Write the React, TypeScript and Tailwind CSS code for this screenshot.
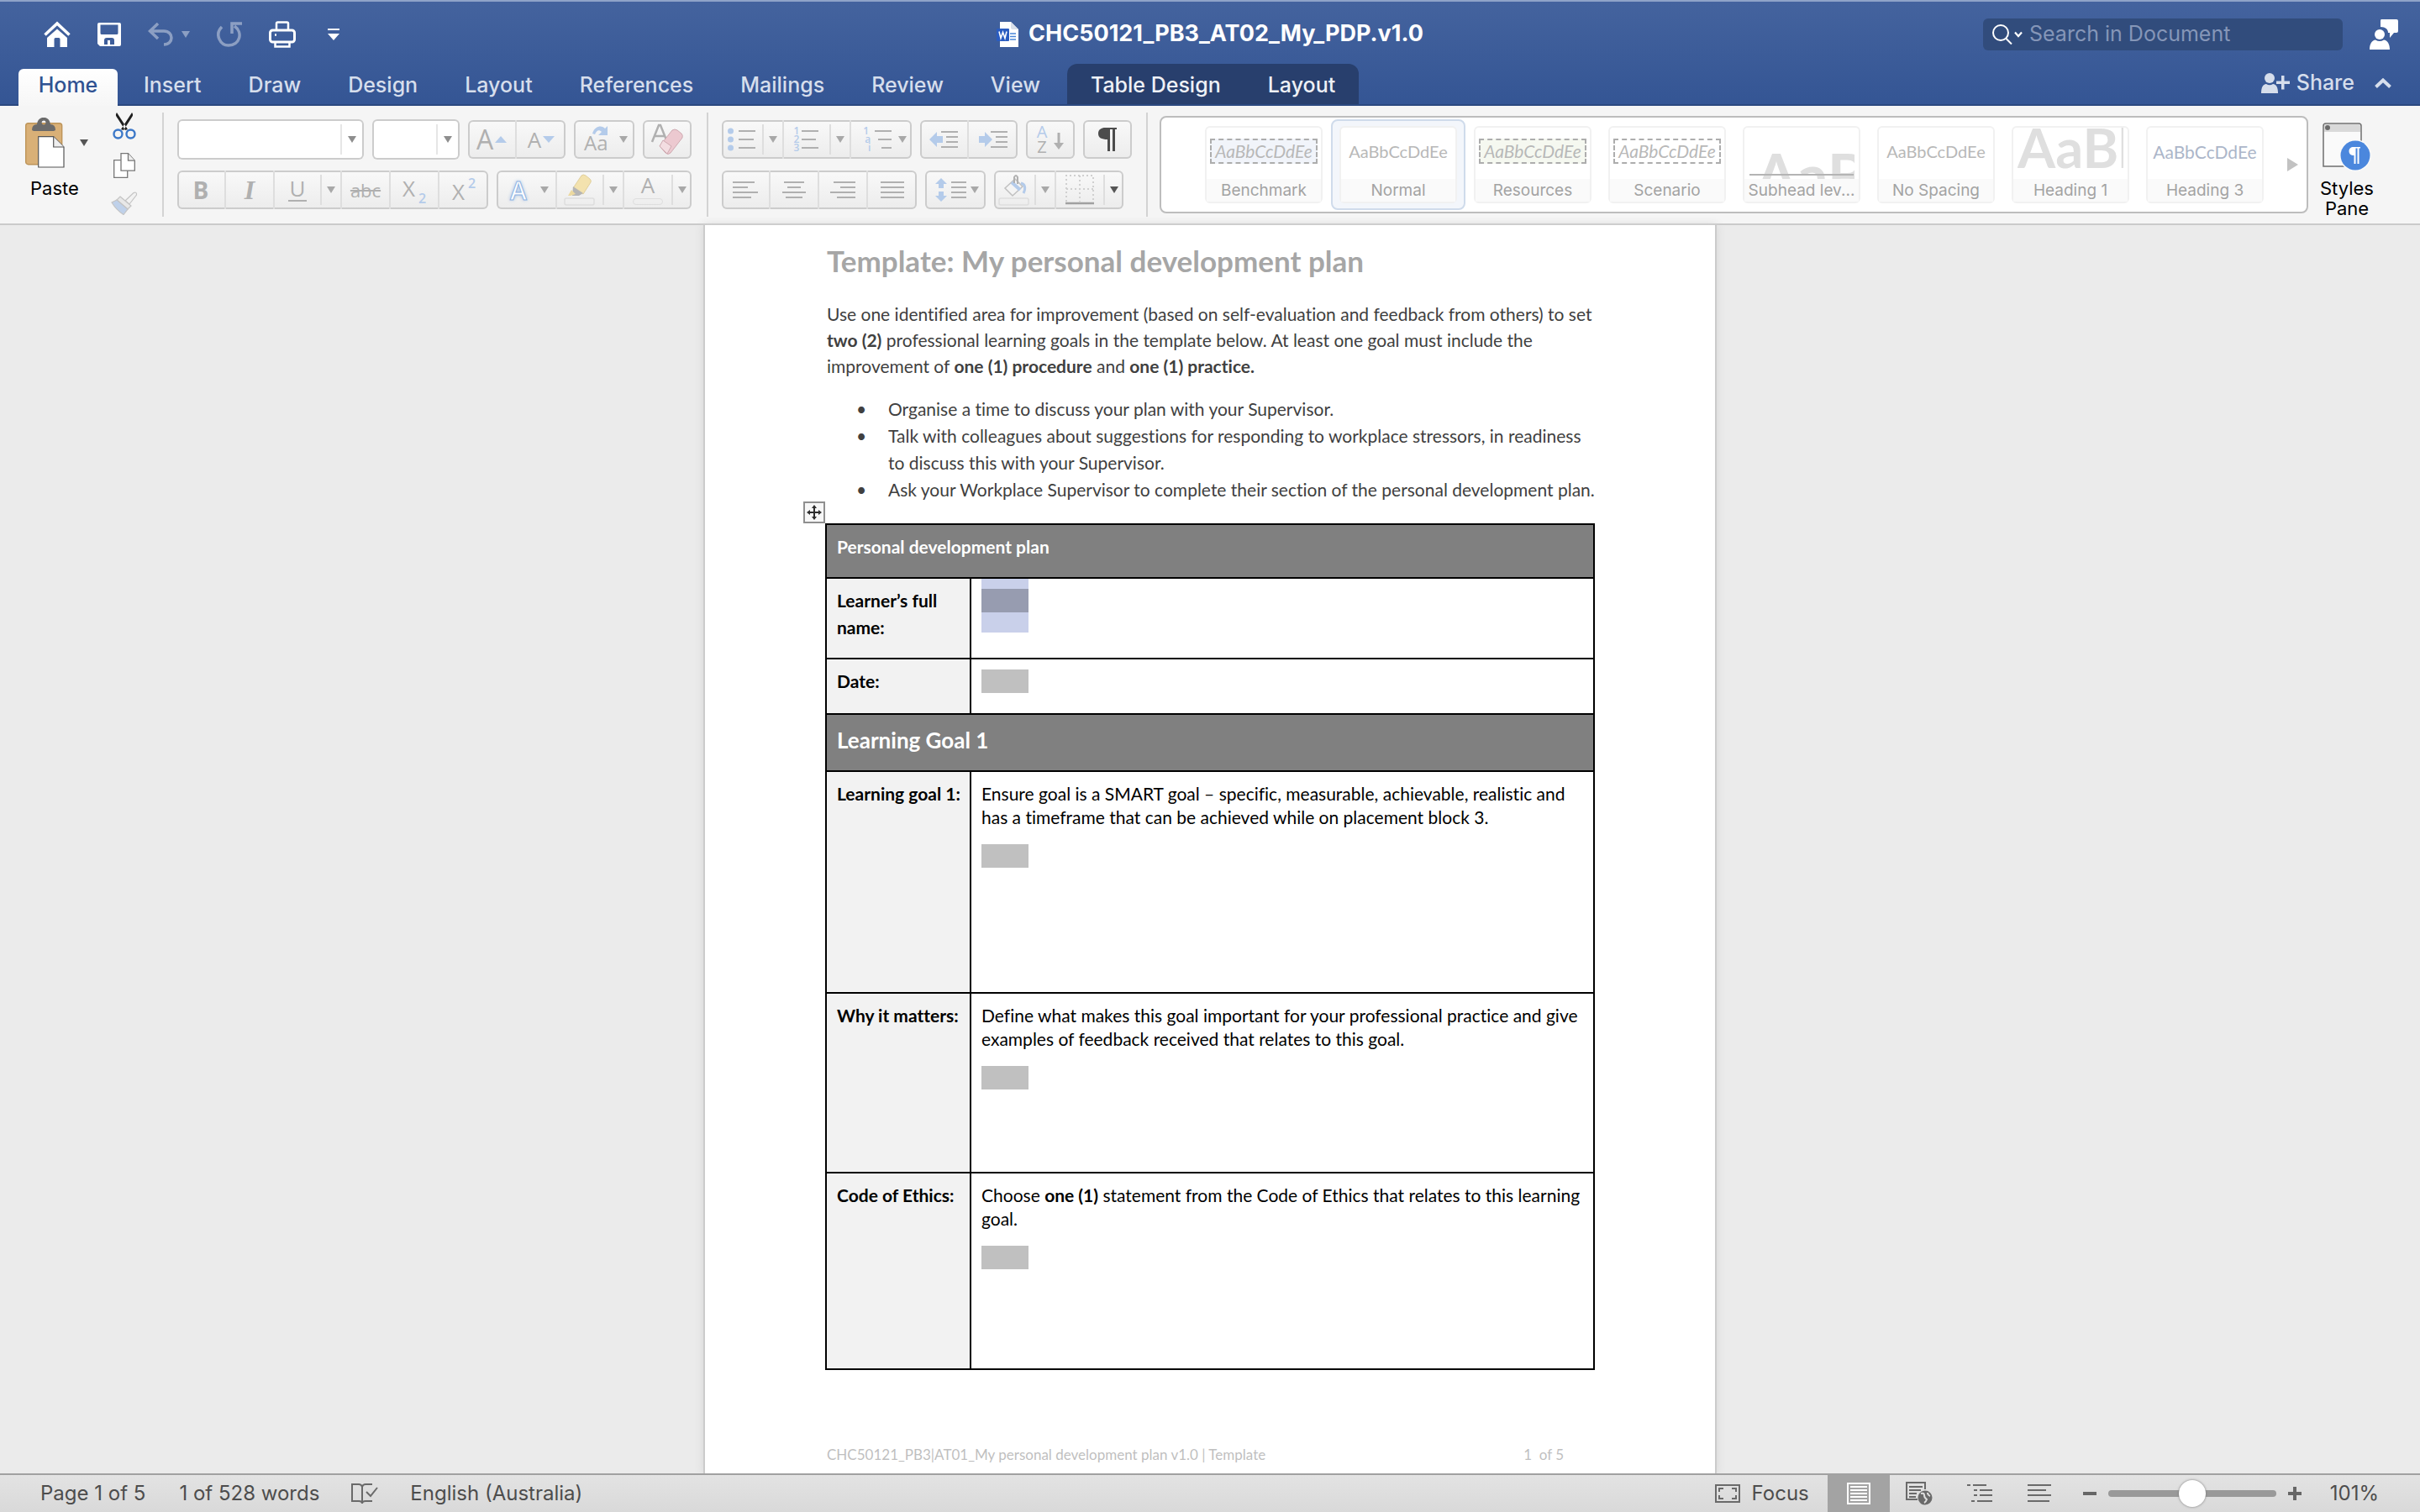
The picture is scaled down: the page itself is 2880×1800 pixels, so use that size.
import type { ReactNode } from 'react'

const BLUE = '#b4cbea'
const GREY = '#b0b0b0'

/* ---------- Small shared pieces ---------- */

const Caret = ({ className = 'text-[#a8a8a8]' }: { className?: string }) => (
	<svg viewBox="0 0 10 8" className={`h-2 w-2.5 shrink-0 ${className}`} aria-hidden="true">
		<path d="M0 0h10L5 8z" fill="currentColor" />
	</svg>
)

const Group = ({ children }: { children: ReactNode }) => (
	<div className="flex h-[46px] shrink-0 divide-x-2 divide-[#dedede] rounded-md bg-linear-to-b from-[#f9f9f9] to-[#ececec] shadow-[inset_0_0_0_2px_#cccccc]">
		{children}
	</div>
)

const Tool = ({ label, children }: { label: string; children: ReactNode }) => (
	<button aria-label={label} className="flex w-[58px] items-center justify-center text-[#b0b0b0]">
		{children}
	</button>
)

const MenuTool = ({ label, children }: { label: string; children: ReactNode }) => (
	<button aria-label={label} className="flex w-[72px] items-center justify-between pr-2 pl-3 text-[#b0b0b0]">
		{children}
		<Caret />
	</button>
)

type SplitToolProps = { label: string; children: ReactNode; dark?: boolean; narrow?: boolean }

const SplitTool = ({ label, children, dark, narrow }: SplitToolProps) => (
	<div className={`flex items-center text-[#b0b0b0] ${narrow ? 'w-[74px]' : 'w-20'}`}>
		<button aria-label={label} className="flex h-full flex-1 items-center justify-center">
			{children}
		</button>
		<button
			aria-label={`${label} options`}
			className="flex h-9 w-6 items-center justify-center border-l-2 border-[#dedede]"
		>
			<Caret className={dark ? 'text-[#555555]' : 'text-[#a8a8a8]'} />
		</button>
	</div>
)

const Separator = () => <div className="mt-2 h-[124px] w-0.5 shrink-0 bg-[#d3d3d3]" />

/* Horizontal rules of different length, used by every list and paragraph icon */
const Lines = ({ rows, color = GREY }: { rows: number[][]; color?: string }) => (
	<g stroke={color} strokeWidth="2">
		{rows.map(([x1, x2, y]) => (
			<path key={y} d={`M${x1} ${y}H${x2}`} />
		))}
	</g>
)

/* ---------- Title bar ---------- */

const QuickAccess = () => (
	<div className="flex items-center gap-8 pl-[52px] text-white">
		<button aria-label="Home">
			<svg viewBox="0 0 32 32" className="size-8" fill="none">
				<path d="M1.500 16.500 16 3l14.500 13.500" stroke="currentColor" strokeWidth="3.500" />
				<path d="M16 9.500 28 20v11h-8.500v-9.500q0-1.500-1.500-1.500h-4q-1.500 0-1.500 1.500V31H4V20z" fill="currentColor" />
			</svg>
		</button>
		<button aria-label="Save">
			<svg viewBox="0 0 28 28" className="size-7">
				<path
					fillRule="evenodd"
					fill="currentColor"
					d="M2 0h24q2 0 2 2v24q0 2-2 2H3l-3-3V2q0-2 2-2zm1.500 2.500v10q0 1.500 1.500 1.500h18q1.500 0 1.500-1.500v-10zM8 26h4v-5h3v5h5v-5q0-3-3-3h-6q-3 0-3 3z"
				/>
			</svg>
		</button>
		<div className="flex items-center gap-2.5 opacity-40">
			<button aria-label="Undo">
				<svg viewBox="0 0 30 28" className="h-7 w-[30px]" fill="none" stroke="currentColor" strokeWidth="3.500">
					<path d="M12 1 2.500 10 12 19M3 10h16c12 0 12 16 0 16" />
				</svg>
			</button>
			<Caret className="text-white" />
		</div>
		<button aria-label="Repeat" className="opacity-40">
			<svg viewBox="0 0 30 30" className="h-[30px] w-[30px]" fill="none" stroke="currentColor" strokeWidth="3.500">
				<path d="M6 6C-3 15 4 28 14 28c13 0 18-15 7-23M30 2H18v12" />
			</svg>
		</button>
		<button aria-label="Print">
			<svg viewBox="0 0 32 32" className="size-8" fill="none" stroke="currentColor" strokeWidth="2.500">
				<path d="M9 11V3q0-1.500 1.500-1.500h11Q23 1.500 23 3v8" />
				<rect x="1.500" y="11" width="29" height="14" rx="3" strokeWidth="3" />
				<path d="M7 16.500h2" />
				<path d="M7.500 24v6.500h17V24" />
			</svg>
		</button>
		<button aria-label="Customise toolbar" className="ml-1.5">
			<svg viewBox="0 0 14 14" className="size-3.5" fill="currentColor">
				<path d="M0 0h14v2H0zM0 6h14l-7 8z" />
			</svg>
		</button>
	</div>
)

const WordFile = () => (
	<svg viewBox="0 0 26 30" className="h-[30px] w-[26px]" aria-hidden="true">
		<path d="M4 0h13l9 9v21H4z" fill="#ffffff" />
		<path d="M17 0l9 9h-7q-2 0-2-2z" fill="#d9dfe9" />
		<path d="M16 14h7M16 17.500h7M16 21h7" stroke="#4a86d8" strokeWidth="1.500" />
		<rect y="8" width="15" height="15" rx="1" fill="#2a5cc0" />
		<path d="m3 11.500 2 8 2.500-7 2.500 7 2-8" fill="none" stroke="#ffffff" strokeWidth="1.600" />
	</svg>
)

const TitleBar = () => (
	<div className="grid h-[74px] grid-cols-[1fr_auto_1fr] items-center pt-[3px]">
		<QuickAccess />
		<h1 className="flex items-center gap-3 text-[27px] font-bold text-white">
			<WordFile />
			CHC50121_PB3_AT02_My_PDP.v1.0
		</h1>
		<div className="flex items-center justify-end gap-8 pr-[26px]">
			<label className="flex h-[38px] w-[428px] items-center rounded-md bg-[#314c7c] pl-[11px]">
				<svg viewBox="0 0 36 24" className="h-6 w-9 shrink-0" fill="none" stroke="#ffffff" strokeWidth="2">
					<circle cx="10" cy="10" r="9" />
					<path d="m16.500 17 6.500 6.500" />
					<path d="m27 9.500 4 4.500 4-4.500" strokeWidth="2.200" />
				</svg>
				<input
					type="search"
					aria-label="Search in Document"
					placeholder="Search in Document"
					className="ml-2 min-w-0 flex-1 bg-transparent text-[25px] text-white outline-none placeholder:text-[#8596b8]"
				/>
			</label>
			<button aria-label="Feedback">
				<svg viewBox="0 0 34 36" className="h-9 w-[34px]" fill="#ffffff">
					<path d="M14 0h18q2 0 2 2v12q0 2-2 2h-3l-5 6v-6h-2c0-4-3-7-9-7V2q0-2 1-2z" />
					<circle cx="12" cy="18" r="6" />
					<path d="M0 36c0-7 3-11 7-11.500q5 3 10 0c4 .500 7 4.500 7 11.500z" />
				</svg>
			</button>
		</div>
	</div>
)

const tabs = ['Insert', 'Draw', 'Design', 'Layout', 'References', 'Mailings', 'Review', 'View']

const TabBar = () => (
	<div className="flex h-[50px] items-end justify-between text-[25px] font-medium text-[#d6deec]">
		<nav className="flex items-end pl-[22px]">
			<button className="mr-[3px] h-11 w-[118px] rounded-t-md bg-linear-to-b from-white to-[#f6f6f6] pb-1 text-[#2f5292]">
				Home
			</button>
			{tabs.map((tab) => (
				<button key={tab} className="mb-0.5 h-12 px-7 pt-1">
					{tab}
				</button>
			))}
			<div className="mb-0.5 ml-1 flex h-12 rounded-t-xl bg-[#283f6d] pt-1 text-[#eef1f6]">
				<button className="px-7">Table Design</button>
				<button className="px-7">Layout</button>
			</div>
		</nav>
		<div className="flex h-full items-center gap-6 pr-[34px] pb-1">
			<button className="flex items-center gap-2">
				<svg viewBox="0 0 34 24" className="h-6 w-[34px]" fill="currentColor">
					<circle cx="10" cy="6" r="6" />
					<path d="M0 24c0-7 2-10.500 6-11q4 2.500 8 0c4 .500 6 4 6 11zM24 3h3.500v6.500H34V13h-6.500v6.500H24V13h-6V9.500h6z" />
				</svg>
				Share
			</button>
			<button aria-label="Collapse ribbon">
				<svg viewBox="0 0 20 12" className="h-3 w-5" fill="none" stroke="currentColor" strokeWidth="4">
					<path d="m1.500 10.500 8.500-8 8.500 8" />
				</svg>
			</button>
		</div>
	</div>
)

/* ---------- Ribbon ---------- */

const Clipboard = () => (
	<div className="flex w-[193px] shrink-0 gap-[26px] pt-2">
		<div className="w-[106px] pt-1.5 pl-[30px]">
			<button className="flex flex-col items-start text-[22px] leading-7 text-black">
				<span className="flex items-center gap-[18px]">
					<svg viewBox="0 0 47 60" className="h-[60px] w-[47px]">
						<rect x=".7" y="6.700" width="43" height="49" rx="3" fill="#d9b077" stroke="#bd9459" strokeWidth="1.400" />
						<path
							fillRule="evenodd"
							fill="#6b6b6b"
							d="M8 15q0-7 6-7c1-11 15-11 16 0q6 0 6 7l-2 1H10zM22 3.500a2.500 2.500 0 1 0 .1 5 2.500 2.500 0 0 0-.1-5z"
						/>
						<path d="M15.700 22.700h18L46 35v24H15.700z" fill="#ffffff" stroke="#555555" strokeWidth="1.200" />
						<path d="M33.700 22.700V35H46" fill="#eeeeee" stroke="#555555" strokeWidth="1.200" />
					</svg>
					<Caret className="text-[#555555]" />
				</span>
				<span className="mt-2.5 pl-1.5">Paste</span>
			</button>
		</div>
		<div className="flex flex-col items-center gap-4">
			<button aria-label="Cut">
				<svg viewBox="0 0 30 32" className="h-8 w-[30px]" fill="none">
					<path d="M6 0c-2 3-1 4 1 7l9 14 3-1zM24 0c2 3 1 4-1 7l-9 14-3-1z" fill="#1f1f1f" />
					<circle cx="7.500" cy="25.500" r="5" stroke="#3c78c8" strokeWidth="2.400" />
					<circle cx="22.500" cy="25.500" r="5" stroke="#3c78c8" strokeWidth="2.400" />
				</svg>
			</button>
			<button aria-label="Copy">
				<svg viewBox="0 0 26 30" className="h-[30px] w-[26px]" fill="#ffffff" stroke="#777777" strokeWidth="1.300">
					<path d="M.7 8.700h16v20.600H.7z" />
					<path d="M9 .7h8.500l7.800 8.500v12H9z" />
					<path d="M17.500.7v8.500h7.800" fill="#eeeeee" />
				</svg>
			</button>
			<button aria-label="Format painter">
				<svg viewBox="0 0 32 28" className="h-7 w-8" strokeWidth="1.200" stroke="#c4c4c4">
					<path d="M17 11 27 1.500q4-1.500 3.500 2.500L22 15z" fill="#f2f2f2" />
					<path d="m11 6 13 11-4 4L7 10z" fill="#e8e8e8" />
					<path d="M7 10 1 13c3 5 7 10 14 14.500L20 21z" fill="#bfd1ea" />
				</svg>
			</button>
		</div>
	</div>
)

const Combo = ({ label, size }: { label: string; size: string }) => (
	<div className={`relative h-12 ${size}`}>
		<select
			aria-label={label}
			className="h-full w-full appearance-none rounded-md bg-white shadow-[inset_0_0_0_2px_#cccccc]"
		>
			<option value=""></option>
		</select>
		<span className="pointer-events-none absolute top-1.5 right-0.5 flex h-9 w-[26px] items-center justify-center border-l-2 border-[#e6e6e6]">
			<Caret className="text-[#8e8e8e]" />
		</span>
	</div>
)

const FontGroup = () => (
	<div className="flex shrink-0 flex-col gap-[13px] pt-4 pr-[18px] pl-4 font-['Open_Sans',sans-serif]">
		<div className="flex h-12 items-center gap-2.5">
			<Combo label="Font" size="w-[222px]" />
			<Combo label="Font size" size="w-[104px]" />
			<Group>
				<Tool label="Increase font size">
					<span className="text-[32px]">A</span>
					<svg viewBox="0 0 14 8" className="ml-0.5 h-2 w-3.5">
						<path d="M0 8h14L7 0z" fill={BLUE} />
					</svg>
				</Tool>
				<Tool label="Decrease font size">
					<span className="text-[26px]">A</span>
					<svg viewBox="0 0 14 8" className="ml-0.5 h-2 w-3.5">
						<path d="M0 0h14L7 8z" fill={BLUE} />
					</svg>
				</Tool>
			</Group>
			<Group>
				<MenuTool label="Change case">
					<span className="relative pt-2 text-2xl">
						Aa
						<svg viewBox="0 0 20 12" className="absolute top-1 left-2.5 h-3 w-5">
							<path d="M0 9C3-1 12-1 15 3l3-3v11H7l4-4C8 4 5 5 3 10z" fill={BLUE} />
						</svg>
					</span>
				</MenuTool>
			</Group>
			<Group>
				<Tool label="Clear formatting">
					<svg viewBox="0 0 40 38" className="h-[38px] w-10">
						<path d="M2 22 10 2h2l8 20M5 15h12" fill="none" stroke={GREY} strokeWidth="2.500" />
						<path d="M26 8q3-2 6 0l5 4q2 2 1 5L24 35q-3 3-6 0l-7-8z" fill="#ecc9d0" stroke="#cfaab1" />
						<path d="m11 27 4-7 10 7-5 9z" fill="#f3dde1" stroke="#cfaab1" />
					</svg>
				</Tool>
			</Group>
		</div>
		<div className="flex gap-2.5">
			<Group>
				<Tool label="Bold">
					<span className="text-[28px] font-bold">B</span>
				</Tool>
				<Tool label="Italic">
					<span className="font-['Liberation_Serif',serif] text-[32px] font-bold italic">I</span>
				</Tool>
				<SplitTool label="Underline">
					<span className="h-7 border-b-2 border-[#b0b0b0] px-0.5 text-[26px] leading-6">U</span>
				</SplitTool>
				<Tool label="Strikethrough">
					<span className="text-[22px] line-through">abc</span>
				</Tool>
				<Tool label="Subscript">
					<span className="-mt-1 text-[26px]">X</span>
					<span className="mt-5 ml-1 text-base font-semibold text-[#b4cbea]">2</span>
				</Tool>
				<Tool label="Superscript">
					<span className="mt-1 text-[26px]">X</span>
					<span className="mb-4 ml-1 text-base font-semibold text-[#b4cbea]">2</span>
				</Tool>
			</Group>
			<Group>
				<MenuTool label="Text effects">
					<span className="pl-1 text-[30px] font-semibold text-white [-webkit-text-stroke:1px_#8fb4e3] [text-shadow:0_0_4px_#8fb4e3]">
						A
					</span>
				</MenuTool>
				<SplitTool label="Highlight colour">
					<svg viewBox="0 0 38 38" className="h-[38px] w-[38px]">
						<path d="M21 2q2-2 5 0l5 4q2 2 1 4l-9 14-12-7z" fill="#f3e2ae" stroke="#e0cf9c" />
						<path d="m11 15 12 8-5 3-8 0z" fill="#b5b5b5" />
						<path d="m9 19 5 5-6 2H5z" fill="#ecd9a0" />
						<rect x="1" y="29" width="35" height="8" rx="2" fill="none" stroke="#dedede" strokeWidth="1.500" />
					</svg>
				</SplitTool>
				<SplitTool label="Font colour">
					<span className="flex flex-col items-center gap-1">
						<span className="text-[26px] leading-6">A</span>
						<span className="h-2 w-9 rounded-sm border border-[#dedede]" />
					</span>
				</SplitTool>
			</Group>
		</div>
	</div>
)

const alignments = [
	{ label: 'Align left', rows: [[0, 26, 2], [0, 18, 8], [0, 30, 14], [0, 22, 20]] },
	{ label: 'Centre', rows: [[3, 27, 2], [7, 23, 8], [1, 29, 14], [5, 25, 20]] },
	{ label: 'Align right', rows: [[4, 30, 2], [12, 30, 8], [0, 30, 14], [8, 30, 20]] },
	{ label: 'Justify', rows: [[1, 29, 2], [1, 29, 8], [1, 29, 14], [1, 29, 20]] },
]

const ParagraphGroup = () => (
	<div className="flex shrink-0 flex-col gap-[13px] pt-4 pr-[17px] pl-4 font-['Open_Sans',sans-serif]">
		<div className="flex h-12 items-center gap-2.5">
			<Group>
				<SplitTool label="Bullets" narrow>
					<svg viewBox="0 0 34 30" className="h-[30px] w-[34px]">
						<g fill={BLUE}>
							<circle cx="3.500" cy="5" r="3.500" />
							<circle cx="3.500" cy="15" r="3.500" />
							<circle cx="3.500" cy="25" r="3.500" />
						</g>
						<Lines rows={[[13, 33, 5], [13, 31, 15], [13, 33, 25]]} />
					</svg>
				</SplitTool>
				<SplitTool label="Numbering">
					<span className="flex flex-col text-xs leading-[10px] font-semibold text-[#b4cbea]">
						<span>1</span>
						<span>2</span>
						<span>3</span>
					</span>
					<svg viewBox="0 0 24 30" className="h-[30px] w-6">
						<Lines rows={[[3, 23, 5], [3, 20, 15], [3, 23, 25]]} />
					</svg>
				</SplitTool>
				<button aria-label="Multilevel list" className="flex w-[72px] items-center justify-between pr-1.5 pl-3">
					<span className="flex flex-col text-xs leading-[10px] font-semibold text-[#b4cbea]">
						<span>1</span>
						<span className="pl-1">a</span>
						<span className="pl-2">i</span>
					</span>
					<svg viewBox="0 0 24 30" className="h-[30px] w-6">
						<Lines rows={[[0, 20, 5], [4, 20, 15], [8, 20, 25]]} />
					</svg>
					<Caret />
				</button>
			</Group>
			<Group>
				<Tool label="Decrease indent">
					<svg viewBox="0 0 34 24" className="h-6 w-[34px]">
						<path d="M0 12 9 3v5h7v8H9v5z" fill={BLUE} />
						<Lines rows={[[14, 34, 3], [20, 34, 9], [20, 34, 15], [14, 34, 21]]} />
					</svg>
				</Tool>
				<Tool label="Increase indent">
					<svg viewBox="0 0 34 24" className="h-6 w-[34px]">
						<path d="M16 12 7 3v5H0v8h7v5z" fill={BLUE} />
						<Lines rows={[[14, 34, 3], [20, 34, 9], [20, 34, 15], [14, 34, 21]]} />
					</svg>
				</Tool>
			</Group>
			<Group>
				<Tool label="Sort">
					<span className="flex flex-col text-xl leading-[18px]">
						<span className="text-[#b4cbea]">A</span>
						<span>Z</span>
					</span>
					<svg viewBox="0 0 12 20" className="mt-1 ml-2 h-5 w-3">
						<path d="M4.500 0h3v12H12l-6 8-6-8h4.500z" fill={GREY} />
					</svg>
				</Tool>
			</Group>
			<Group>
				<Tool label="Show formatting marks">
					<svg viewBox="0 0 22 28" className="h-7 w-[22px]" fill="#4c4c4c">
						<path d="M8 0h14v2h-2v26h-3V2h-3v26h-3V14C4 14 0 12 0 7s4-7 8-7z" />
					</svg>
				</Tool>
			</Group>
		</div>
		<div className="flex gap-2.5">
			<Group>
				{alignments.map(({ label, rows }) => (
					<Tool key={label} label={label}>
						<svg viewBox="0 0 30 22" className="h-[22px] w-[30px]">
							<Lines rows={rows} />
						</svg>
					</Tool>
				))}
			</Group>
			<Group>
				<MenuTool label="Line spacing">
					<svg viewBox="0 0 38 28" className="h-7 w-[38px]">
						<path d="m7 0 7 7h-4v5H4V7H0zM7 28l7-7h-4v-5H4v5H0z" fill={BLUE} />
						<Lines rows={[[19, 37, 5], [19, 37, 11], [19, 37, 17], [19, 37, 23]]} />
					</svg>
				</MenuTool>
			</Group>
			<Group>
				<SplitTool label="Shading" narrow>
					<svg viewBox="0 0 38 38" className="h-[38px] w-[38px]">
						<path d="M20 6 8 17l9 9 12-11z" fill="#f4f4f4" stroke="#c0c0c0" strokeWidth="1.500" />
						<path d="m16 10 10 9" stroke={BLUE} strokeWidth="4" />
						<path d="M27 11c5 1 6 6 3 12" fill="none" stroke={BLUE} strokeWidth="3" />
						<path d="M19 11V4q2-4 4 0v8" fill="none" stroke={GREY} strokeWidth="2" />
						<rect x="1" y="29" width="35" height="8" rx="2" fill="none" stroke="#dedede" strokeWidth="1.500" />
					</svg>
				</SplitTool>
				<SplitTool label="Borders" dark>
					<svg viewBox="0 0 34 36" className="h-9 w-[34px]" fill="none" stroke="#d0d0d0" strokeWidth="2">
						<path d="M1 32V1h32v31M1 17h32M17 1v31" strokeDasharray="2 3" />
						<path d="M0 34h34" stroke="#a0a0a0" strokeWidth="2.500" />
					</svg>
				</SplitTool>
			</Group>
		</div>
	</div>
)

const boxedPreview = 'mb-1.5 w-32 border-2 border-dashed border-[#adadad] text-[21px] leading-[26px] italic'
const plainPreview = 'mb-1.5 text-xl'

const styleCards = [
	{ name: 'Benchmark', sample: 'AaBbCcDdEe', preview: `${boxedPreview} bg-[#f1f4fa]` },
	{ name: 'Normal', sample: 'AaBbCcDdEe', preview: plainPreview, selected: true },
	{ name: 'Resources', sample: 'AaBbCcDdEe', preview: `${boxedPreview} bg-[#f5f8f0]` },
	{ name: 'Scenario', sample: 'AaBbCcDdEe', preview: boxedPreview },
	{
		name: 'Subhead lev...',
		sample: 'AaB',
		preview: 'mt-5 w-[126px] self-start pl-2 text-left text-[72px] leading-[72px] font-bold text-[#dfdfdf]',
		ruled: true,
	},
	{ name: 'No Spacing', sample: 'AaBbCcDdEe', preview: plainPreview },
	{
		name: 'Heading 1',
		sample: 'AaBb',
		preview: '-mt-2.5 w-[126px] self-start text-left text-[65px] leading-[66px] font-bold text-[#dfdfdf]',
	},
	{ name: 'Heading 3', sample: 'AaBbCcDdEe', preview: 'mb-1 text-[21px] text-[#acb6c9]' },
]

const StylesGallery = () => (
	<div className="mt-3 ml-3.5 flex h-[116px] min-w-0 flex-1 items-start justify-between overflow-hidden rounded-lg border-2 border-[#bdbdbd] bg-white pr-2.5 pl-[42px]">
		<div className="flex pt-0.5">
			{styleCards.map(({ name, sample, preview, selected, ruled }) => (
				<button
					key={name}
					className={`h-[108px] w-40 shrink-0 rounded-lg border-2 px-2 py-1.5 ${
						selected ? 'border-[#cfdbeb] bg-[#f3f6fb]' : 'border-transparent'
					}`}
				>
					<span className="flex h-full flex-col rounded-md border-2 border-[#f1f1f1] bg-white">
						<span className="relative flex h-[61px] items-center justify-center overflow-hidden font-['Lato',sans-serif] whitespace-nowrap text-[#b8b8b8]">
							<span className={`shrink-0 overflow-hidden ${preview}`}>{sample}</span>
							{ruled && <span className="absolute right-1.5 bottom-1 left-1.5 h-0.5 bg-[#b4b4b4]" />}
						</span>
						<span className="flex flex-1 items-center justify-center bg-[#fafafa] text-[19px] leading-6 text-[#a3a3a3]">
							{name}
						</span>
					</span>
				</button>
			))}
		</div>
		<button aria-label="More styles" className="h-full">
			<svg viewBox="0 0 13 16" className="h-4 w-[13px]">
				<path d="M0 0v16l13-8z" fill="#c2c2c2" />
			</svg>
		</button>
	</div>
)

const StylesPane = () => (
	<button className="mr-[43px] flex w-[90px] shrink-0 flex-col items-center pt-5 pl-0.5 text-[22px] leading-6 text-black">
		<svg viewBox="0 0 58 58" className="mb-2 h-[58px] w-[58px]">
			<path d="M1 52V4q0-3 3-3h39q3 0 3 3v48z" fill="#fafafa" stroke="#6f6f6f" strokeWidth="1.500" />
			<path d="M2 11V4q0-2 2-2h39q2 0 2 2v7z" fill="#d9d9d9" />
			<circle cx="6" cy="6" r="3" fill="#6a6a6a" />
			<circle cx="39" cy="39" r="19" fill="#fafafa" />
			<circle cx="39" cy="39" r="17.500" fill="#4b87dd" />
			<path d="M37 29h8v1.500h-1.500V49h-2V30.500h-2V49h-2V39c-4 0-6-2-6-5s2-5 5.500-5z" fill="#ffffff" />
		</svg>
		Styles Pane
	</button>
)

const Ribbon = () => (
	<div className="flex h-[142px] border-b-2 border-[#cacaca] bg-[#f5f5f5]">
		<Clipboard />
		<Separator />
		<FontGroup />
		<Separator />
		<ParagraphGroup />
		<Separator />
		<StylesGallery />
		<StylesPane />
	</div>
)

/* ---------- Document ---------- */

const Field = ({ label }: { label: string }) => (
	<input aria-label={label} className="block h-7 w-14 bg-[#c0c0c0] outline-none" />
)

const labelCell = 'border-2 border-black bg-[#f2f2f2] px-3 pt-2.5 text-left align-top leading-8 font-bold whitespace-nowrap'
const bodyCell = 'border-2 border-black px-3 pt-3 align-top leading-7 whitespace-nowrap'
const headCell = 'border-2 border-black bg-[#808080] px-3 pt-2.5 text-left align-top font-bold text-white'

const PlanTable = () => (
	<div className="relative mt-6">
		<button
			aria-label="Move table"
			className="absolute -top-[26px] -left-[26px] flex size-[26px] items-center justify-center border-2 border-[#8f8f8f] bg-[#f7f7f7]"
		>
			<svg viewBox="0 0 18 18" className="size-[18px]" fill="#2e2e2e">
				<path d="M8 4H6l3-4 3 4h-2v4h4V6l4 3-4 3v-2h-4v4h2l-3 4-3-4h2v-4H4v2L0 9l4-3v2h4z" />
			</svg>
		</button>
		<table className="w-full table-fixed border-collapse text-black">
			<colgroup>
				<col className="w-[172px]" />
				<col />
			</colgroup>
			<thead>
				<tr className="h-16">
					<th colSpan={2} className={`${headCell} leading-8`}>
						Personal development plan
					</th>
				</tr>
			</thead>
			<tbody>
				<tr className="h-24">
					<th className={labelCell}>
						Learner’s full
						<br />
						name:
					</th>
					<td className="border-2 border-black px-3 align-top">
						<div className="w-14 bg-[#c9d0ea] pt-3 pb-6">
							<input aria-label="Learner’s full name" className="block h-7 w-14 bg-[#979cb0] outline-none" />
						</div>
					</td>
				</tr>
				<tr className="h-[66px]">
					<th className={labelCell}>Date:</th>
					<td className={bodyCell}>
						<Field label="Date" />
					</td>
				</tr>
				<tr className="h-[68px]">
					<th colSpan={2} className={`${headCell} text-[26px] leading-10`}>
						Learning Goal 1
					</th>
				</tr>
				<tr className="h-[264px]">
					<th className={labelCell}>Learning goal 1:</th>
					<td className={bodyCell}>
						<p className="mb-[18px]">
							Ensure goal is a SMART goal – specific, measurable, achievable, realistic and
							<br />
							has a timeframe that can be achieved while on placement block 3.
						</p>
						<Field label="Learning goal 1" />
					</td>
				</tr>
				<tr className="h-[214px]">
					<th className={labelCell}>Why it matters:</th>
					<td className={bodyCell}>
						<p className="mb-[18px]">
							Define what makes this goal important for your professional practice and give
							<br />
							examples of feedback received that relates to this goal.
						</p>
						<Field label="Why it matters" />
					</td>
				</tr>
				<tr className="h-[234px]">
					<th className={labelCell}>Code of Ethics:</th>
					<td className={bodyCell}>
						<p className="mb-[18px]">
							Choose <b>one (1)</b> statement from the Code of Ethics that relates to this learning
							<br />
							goal.
						</p>
						<Field label="Code of Ethics" />
					</td>
				</tr>
			</tbody>
		</table>
	</div>
)

const Bullet = ({ children }: { children: ReactNode }) => (
	<li className="flex">
		<span className="w-[38px] shrink-0" aria-hidden="true">
			•
		</span>
		<span>{children}</span>
	</li>
)

const Document = () => (
	<main className="flex flex-1 justify-center bg-[#ebebeb]">
		<article className="flex w-[1206px] flex-col border-x-2 border-[#cbcbcb] bg-white px-[143px] pt-[22px] pb-2.5 font-['Lato',sans-serif] text-[21px] text-[#404040] shadow-[0_0_10px_#d4d4d4] [font-variant-ligatures:none]">
			<h2 className="pl-0.5 text-[35px] leading-10 font-bold text-[#a6a6a6]">Template: My personal development plan</h2>
			<p className="mt-7 pl-0.5 leading-[31px] whitespace-nowrap">
				Use one identified area for improvement (based on self-evaluation and feedback from others) to set
				<br />
				<b>two (2)</b> professional learning goals in the template below. At least one goal must include the
				<br />
				improvement of <b>one (1) procedure</b> and <b>one (1) practice.</b>
			</p>
			<ul className="mt-5 pl-[37px] leading-8 whitespace-nowrap">
				<Bullet>Organise a time to discuss your plan with your Supervisor.</Bullet>
				<Bullet>
					Talk with colleagues about suggestions for responding to workplace stressors, in readiness
					<br />
					to discuss this with your Supervisor.
				</Bullet>
				<Bullet>Ask your Workplace Supervisor to complete their section of the personal development plan.</Bullet>
			</ul>
			<PlanTable />
			<footer className="mt-auto flex justify-between pr-[37px] pl-0.5 text-[17px] leading-6 text-[#bfbfbf]">
				<span>CHC50121_PB3|AT01_My personal development plan v1.0 | Template</span>
				<span>1&nbsp; of 5</span>
			</footer>
		</article>
	</main>
)

/* ---------- Status bar ---------- */

const StatusBar = () => (
	<div className="flex h-[46px] items-center justify-between border-t-2 border-[#a1a1a1] bg-linear-to-b from-[#e3e3e3] to-[#d9d9d9] pr-[49px] pl-12 text-2xl text-[#4d4d4d]">
		<div className="flex items-center">
			<button className="mr-10">Page 1 of 5</button>
			<button className="mr-[38px]">1 of 528 words</button>
			<button aria-label="Proofing" className="mr-[38px]">
				<svg viewBox="0 0 32 26" className="h-[26px] w-8" fill="none" stroke="#6a6a6a" strokeWidth="2">
					<path d="M13 23V5q-1-3-4-3H1v20h8q4 0 4 3 0-3 4-3h8M13 5q1-3 4-3h8" />
					<path d="m18 11 5 5 8-10" />
				</svg>
			</button>
			<button>English (Australia)</button>
		</div>
		<div className="flex h-full items-center">
			<button className="mr-[22px] flex items-center gap-3.5">
				<svg viewBox="0 0 30 22" className="h-[22px] w-[30px]" fill="none" stroke="#6a6a6a" strokeWidth="2">
					<path d="M1 1h28v20H1z" />
					<path d="M5 9V5h5M20 5h5v4M25 13v4h-5M10 17H5v-4" />
				</svg>
				Focus
			</button>
			<button aria-label="Print layout" className="flex h-full w-[74px] items-center justify-center bg-[#a3a3a3]">
				<svg viewBox="0 0 28 26" className="h-[26px] w-7" fill="none" stroke="#ffffff" strokeWidth="2">
					<path d="M1 1h26v24H1zM4 5h20M4 9h20M4 13h20M4 17h20M4 21h20" />
				</svg>
			</button>
			<button aria-label="Web layout" className="ml-[19px]">
				<svg viewBox="0 0 32 28" className="h-7 w-8" fill="none" stroke="#6a6a6a" strokeWidth="2">
					<path d="M14 21H1V1h22v8M4 6h16M4 10h14M4 14h9M4 18h8" />
					<circle cx="23" cy="19" r="8.500" fill="#6a6a6a" stroke="none" />
					<path d="M18 14q4-1 4 2t3 5q-1 3-3 4M26 13q0 3 3 4" stroke="#dedede" />
				</svg>
			</button>
			<button aria-label="Outline" className="ml-[41px]">
				<svg viewBox="0 0 30 22" className="h-[22px] w-[30px]" fill="none" stroke="#6a6a6a" strokeWidth="2">
					<path d="M0 1h4M7 1h16M8 7h4M15 7h15M8 13h4M15 13h15M5 20h4M12 20h18" />
				</svg>
			</button>
			<button aria-label="Draft" className="ml-[42px]">
				<svg viewBox="0 0 28 22" className="h-[22px] w-7" fill="none" stroke="#6a6a6a" strokeWidth="2">
					<path d="M0 1h28M0 7h22M0 13h28M0 20h26" />
				</svg>
			</button>
			<button aria-label="Zoom out" className="ml-[38px]">
				<svg viewBox="0 0 16 16" className="size-4">
					<path d="M0 8h16" stroke="#666666" strokeWidth="4" />
				</svg>
			</button>
			<input
				type="range"
				aria-label="Zoom"
				min="0"
				max="100"
				defaultValue="50"
				className="mx-3.5 h-2 w-[200px] appearance-none rounded-full bg-[#999999] [&::-webkit-slider-thumb]:size-8 [&::-webkit-slider-thumb]:appearance-none [&::-webkit-slider-thumb]:rounded-full [&::-webkit-slider-thumb]:bg-white [&::-webkit-slider-thumb]:shadow-[0_0_3px_#777777]"
			/>
			<button aria-label="Zoom in">
				<svg viewBox="0 0 16 16" className="size-4">
					<path d="M0 8h16M8 0v16" stroke="#666666" strokeWidth="4" />
				</svg>
			</button>
			<button className="ml-[34px]">101%</button>
		</div>
	</div>
)

const App = () => {
	return (
		<div className="flex min-h-screen flex-col font-['Inter',sans-serif]">
			<header className="border-t-2 border-[#8fa3c8] bg-linear-to-b from-[#44639e] to-[#345594] shadow-[inset_0_-2px_0_#2b487f]">
				<TitleBar />
				<TabBar />
			</header>
			<Ribbon />
			<Document />
			<StatusBar />
		</div>
	)
}

export default App
